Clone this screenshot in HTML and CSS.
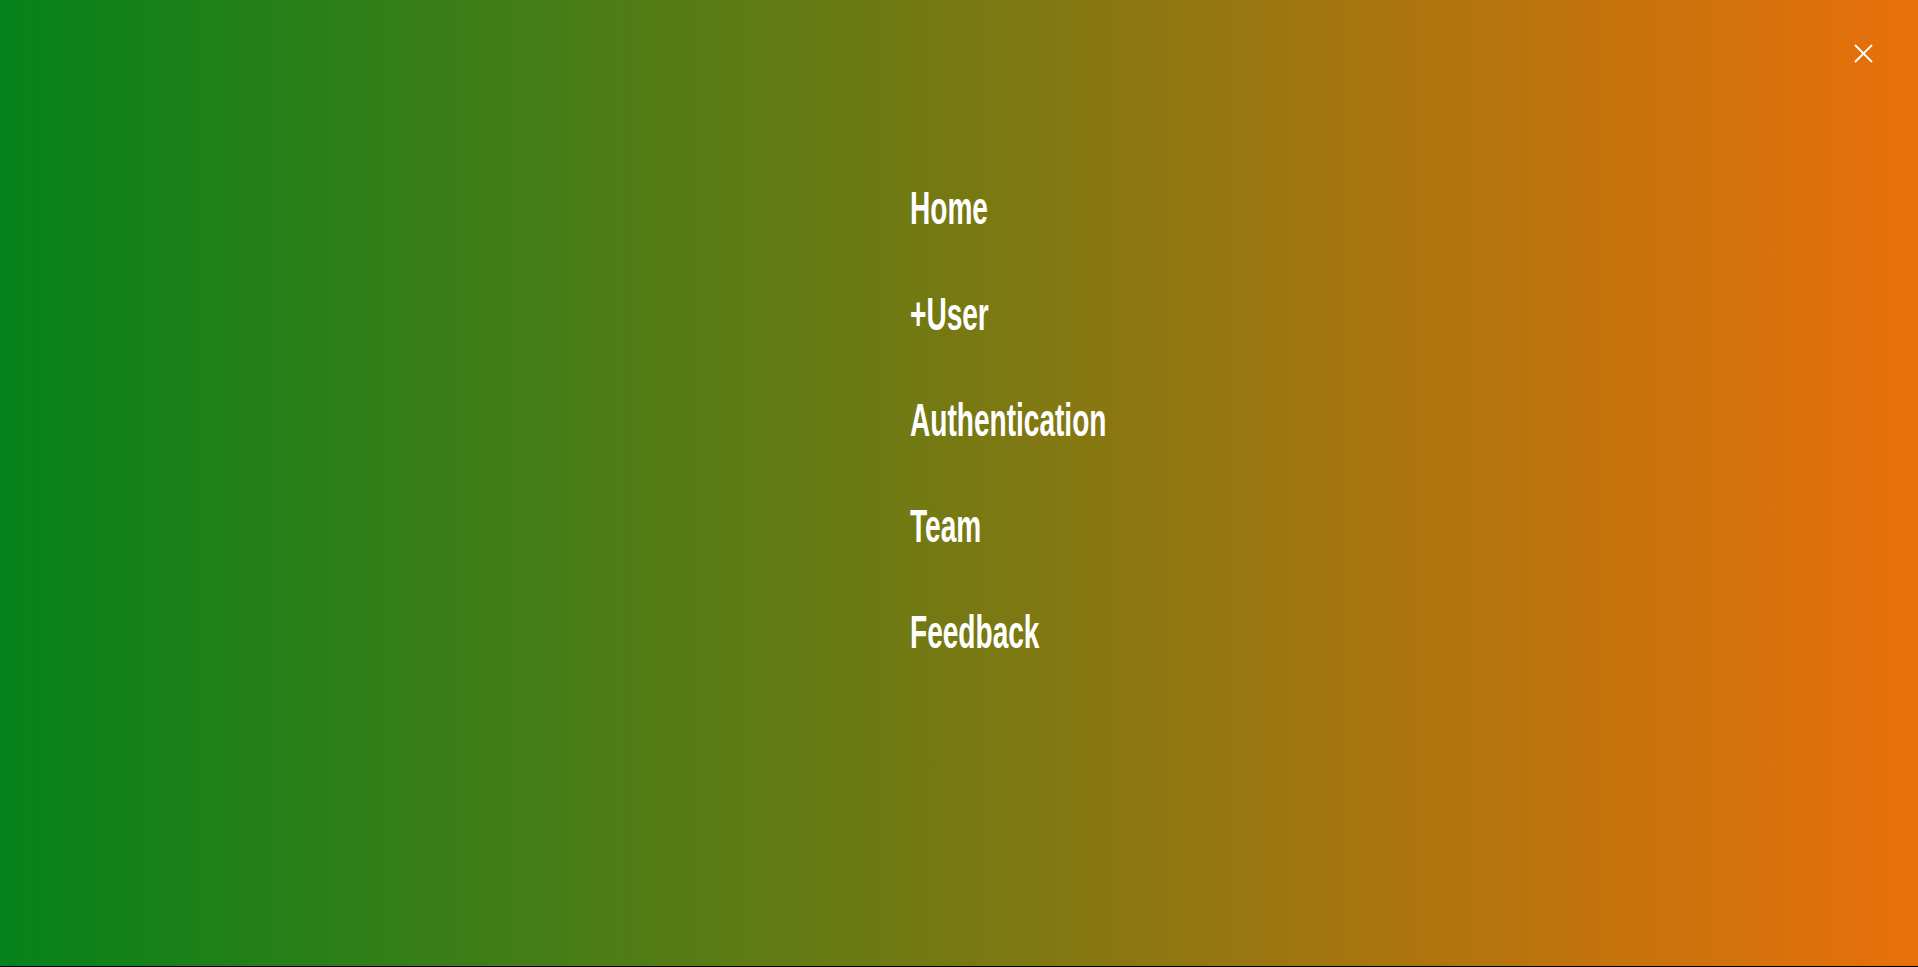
FILE: index.html
```html
<!DOCTYPE html>
<html lang="en">
<head>
<meta charset="utf-8">
<title>Menu</title>
<link rel="stylesheet" href="styles.css">
</head>
<body>
<div class="overlay">
  <button class="close" aria-label="Close">
    <svg width="19" height="19" viewBox="0 0 19 19"><path d="M1 1L18 18M18 1L1 18" stroke="#fff" stroke-width="1.8" fill="none"/></svg>
  </button>
  <nav class="menu">
    <a class="item" href="#">Home</a>
    <a class="item" href="#">+User</a>
    <a class="item" href="#">Authentication</a>
    <a class="item" href="#">Team</a>
    <a class="item" href="#">Feedback</a>
  </nav>
</div>
</body>
</html>
```
FILE: styles.css
```css
html, body {
  margin: 0;
  padding: 0;
  height: 100%;
  background: #000;
}
.overlay {
  position: relative;
  height: 966px;
  background: linear-gradient(to right, #05821b 0%, #e9700a 100%);
  overflow: hidden;
}
.close {
  position: absolute;
  top: 44px;
  right: 45px;
  width: 19px;
  height: 19px;
  padding: 0;
  border: 0;
  background: none;
  display: block;
}
.close svg { display: block; }
.menu {
  display: flex;
  flex-direction: column;
  align-items: flex-start;
  padding-top: 155px;
  padding-left: 910px;
}
.item {
  display: block;
  color: #fff;
  text-decoration: none;
  font-family: "Liberation Sans Narrow", "Liberation Sans", sans-serif;
  font-weight: bold;
  font-size: 46px;
  line-height: 106px;
  height: 106px;
  transform: scaleX(0.61);
  transform-origin: left center;
  white-space: nowrap;
}
```
